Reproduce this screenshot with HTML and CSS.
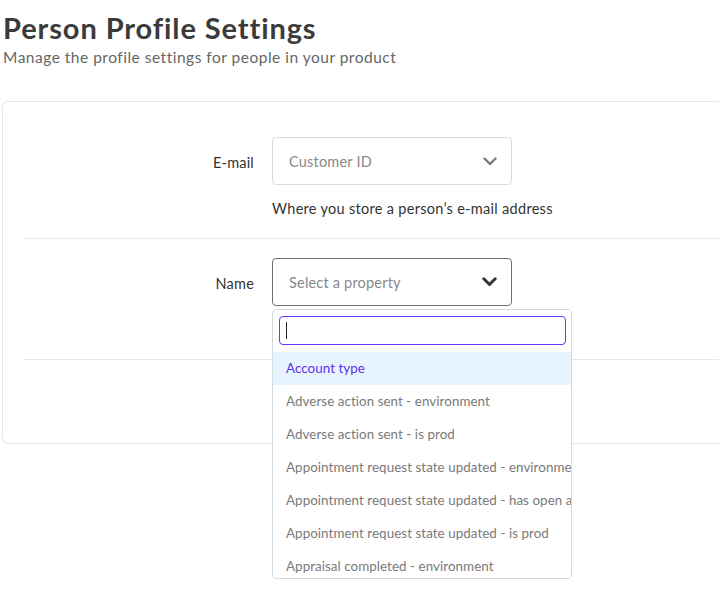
FILE: index.html
```html
<!DOCTYPE html>
<html>
<head>
<meta charset="utf-8">
<link rel="stylesheet" href="styles.css">
</head>
<body>
<div class="page">
  <h1 class="title">Person Profile Settings</h1>
  <p class="subtitle">Manage the profile settings for people in your product</p>
  <div class="card">
    <div class="row">
      <div class="label">E-mail</div>
      <div class="field">
        <div class="select">
          <span class="placeholder">Customer ID</span>
          <svg class="chev" width="14" height="9" viewBox="0 0 14 9"><path d="M1.5 1.5 L7 7 L12.5 1.5" fill="none" stroke="#7a7a7a" stroke-width="2.4" stroke-linecap="round" stroke-linejoin="round"/></svg>
        </div>
        <div class="help">Where you store a person’s e-mail address</div>
      </div>
    </div>
    <div class="row">
      <div class="label">Name</div>
      <div class="field">
        <div class="select select-open">
          <span class="placeholder">Select a property</span>
          <svg class="chev" width="15" height="10" viewBox="0 0 15 10"><path d="M1.8 1.8 L7.5 7.5 L13.2 1.8" fill="none" stroke="#333" stroke-width="3" stroke-linecap="round" stroke-linejoin="round"/></svg>
        </div>
        <div class="help"></div>
        <div class="dropdown">
          <div class="search"><span class="caret"></span></div>
          <ul class="options">
            <li class="opt active">Account type</li>
            <li class="opt">Adverse action sent - environment</li>
            <li class="opt">Adverse action sent - is prod</li>
            <li class="opt">Appointment request state updated - environme</li>
            <li class="opt">Appointment request state updated - has open a</li>
            <li class="opt">Appointment request state updated - is prod</li>
            <li class="opt">Appraisal completed - environment</li>
          </ul>
        </div>
      </div>
    </div>
  </div>
</div>
</body>
</html>
```
FILE: styles.css
```css
html, body {
  margin: 0;
  padding: 0;
  background: #fff;
  overflow: hidden;
}
body {
  font-family: "Lato", "Noto Sans", sans-serif;
  color: #333;
  width: 719px;
  height: 601px;
}
.page {
  padding: 0 0 0 2px;
}
.title {
  margin: 0;
  padding: 10px 0 0 1px;
  font-size: 29px;
  line-height: 36px;
  font-weight: 700;
  color: #3b3b3b;
  letter-spacing: 0.9px;
}
.subtitle {
  margin: 0;
  padding-left: 1px;
  font-size: 15.5px;
  line-height: 23px;
  color: #666;
  letter-spacing: 0.5px;
}
.card {
  margin-top: 32px;
  width: 717px;
  border: 1px solid #e6e6e6;
  border-right: none;
  border-radius: 6px 0 0 6px;
  padding: 16px 0 83px 20px;
  box-sizing: border-box;
}
.row {
  display: flex;
  align-items: flex-start;
  gap: 18px;
  padding: 19px 0;
  border-bottom: 1px solid #e8e8e8;
}
.label {
  width: 231px;
  text-align: right;
  font-size: 14.5px;
  line-height: 48px;
  padding-top: 2px;
  color: #333;
  letter-spacing: 0.2px;
}
.field {
  position: relative;
  width: 240px;
}
.select {
  height: 48px;
  box-sizing: border-box;
  border: 1px solid #d6dde0;
  border-radius: 4px;
  display: flex;
  align-items: center;
  justify-content: space-between;
  padding: 0 14px 0 16px;
}
.select-open {
  border-color: #6e6e6e;
}
.placeholder {
  font-size: 14.5px;
  color: #888;
  letter-spacing: 0.2px;
}
.chev {
  display: block;
}
.help {
  margin-top: 14px;
  height: 20px;
  font-size: 14.5px;
  line-height: 20px;
  color: #333;
  white-space: nowrap;
  letter-spacing: 0.3px;
}
.dropdown {
  position: absolute;
  top: 51px;
  left: 0;
  width: 300px;
  height: 270px;
  box-sizing: border-box;
  border: 1px solid #cfdce2;
  border-radius: 4px;
  background: #fff;
  overflow: hidden;
  z-index: 5;
}
.search {
  margin: 6px 5px 0 6px;
  height: 29px;
  box-sizing: border-box;
  border: 1.5px solid #6a35ff;
  border-radius: 4px;
  display: flex;
  align-items: center;
  padding-left: 6px;
}
.caret {
  width: 1px;
  height: 17px;
  background: #222;
}
.options {
  list-style: none;
  margin: 7px 0 0 0;
  padding: 0;
}
.opt {
  height: 33px;
  line-height: 33px;
  padding-left: 13px;
  font-size: 13.4px;
  color: #7a7a7a;
  white-space: nowrap;
  overflow: hidden;
  letter-spacing: 0.05px;
}
.opt.active {
  background: #e8f4fd;
  color: #5b2ff0;
}
```
